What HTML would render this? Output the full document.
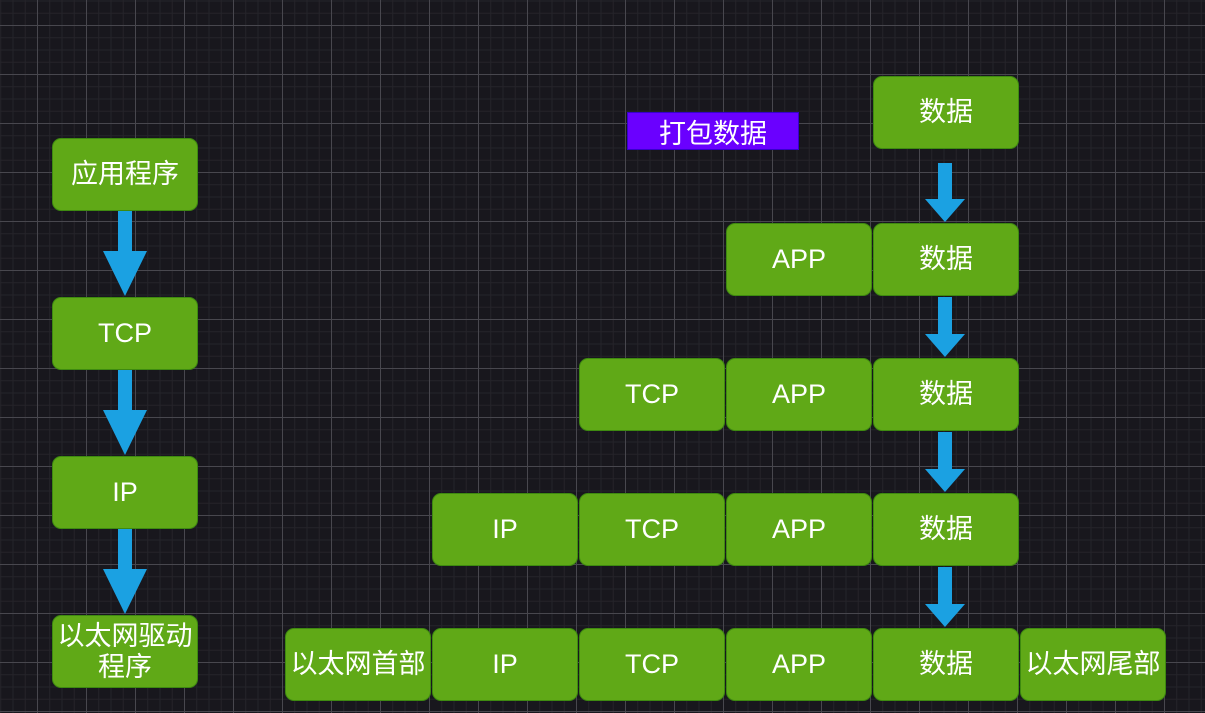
<!DOCTYPE html><html><head><meta charset="utf-8"><style>
body{margin:0;width:1205px;height:713px;overflow:hidden;background:#18171d;position:relative;font-family:"Liberation Sans","Noto Sans CJK SC",sans-serif}
.g{position:absolute;inset:0;background-image:
linear-gradient(to right,#48474e 1px,transparent 1px),
linear-gradient(to bottom,#48474e 1px,transparent 1px),
linear-gradient(to right,#25242a 1px,transparent 1px),
linear-gradient(to bottom,#25242a 1px,transparent 1px);
background-size:49px 49px,49px 49px,12.25px 12.25px,12.25px 12.25px;
background-position:37px 25px,37px 25px,37px 25px,37px 25px}
.b{position:absolute;width:144px;height:71px;background:#60a917;border:1px solid #3e8a10;border-radius:9px;color:#fff;font-size:27px;display:flex;align-items:center;justify-content:center;text-align:center;line-height:31px}
.p{position:absolute;left:627px;top:112px;width:170px;height:36px;background:#6a00ff;border:1px solid #3700cc;color:#fff;font-size:27px;display:flex;align-items:center;justify-content:center}
svg{position:absolute;left:0;top:0}
</style></head><body><div class="g"></div>
<div class="b" style="left:52px;top:138px">应用程序</div>
<div class="b" style="left:52px;top:297px">TCP</div>
<div class="b" style="left:52px;top:456px">IP</div>
<div class="b" style="left:52px;top:615px">以太网驱动<br>程序</div>
<div class="p">打包数据</div>
<div class="b" style="left:873px;top:76px">数据</div>
<div class="b" style="left:726px;top:223px">APP</div><div class="b" style="left:873px;top:223px">数据</div>
<div class="b" style="left:579px;top:358px">TCP</div><div class="b" style="left:726px;top:358px">APP</div><div class="b" style="left:873px;top:358px">数据</div>
<div class="b" style="left:432px;top:493px">IP</div><div class="b" style="left:579px;top:493px">TCP</div><div class="b" style="left:726px;top:493px">APP</div><div class="b" style="left:873px;top:493px">数据</div>
<div class="b" style="left:285px;top:628px">以太网首部</div><div class="b" style="left:432px;top:628px">IP</div><div class="b" style="left:579px;top:628px">TCP</div><div class="b" style="left:726px;top:628px">APP</div><div class="b" style="left:873px;top:628px">数据</div><div class="b" style="left:1020px;top:628px">以太网尾部</div>
<svg width="1205" height="713" fill="#1ba1e2">
<path d="M118 211h14v40h15l-22 45-22-45h15z"/>
<path d="M118 370h14v40h15l-22 45-22-45h15z"/>
<path d="M118 529h14v40h15l-22 45-22-45h15z"/>
<path d="M938 163h14v36h13l-20 23-20-23h13z"/>
<path d="M938 297h14v37h13l-20 23-20-23h13z"/>
<path d="M938 432h14v37h13l-20 23-20-23h13z"/>
<path d="M938 567h14v37h13l-20 23-20-23h13z"/>
</svg>
</body></html>
